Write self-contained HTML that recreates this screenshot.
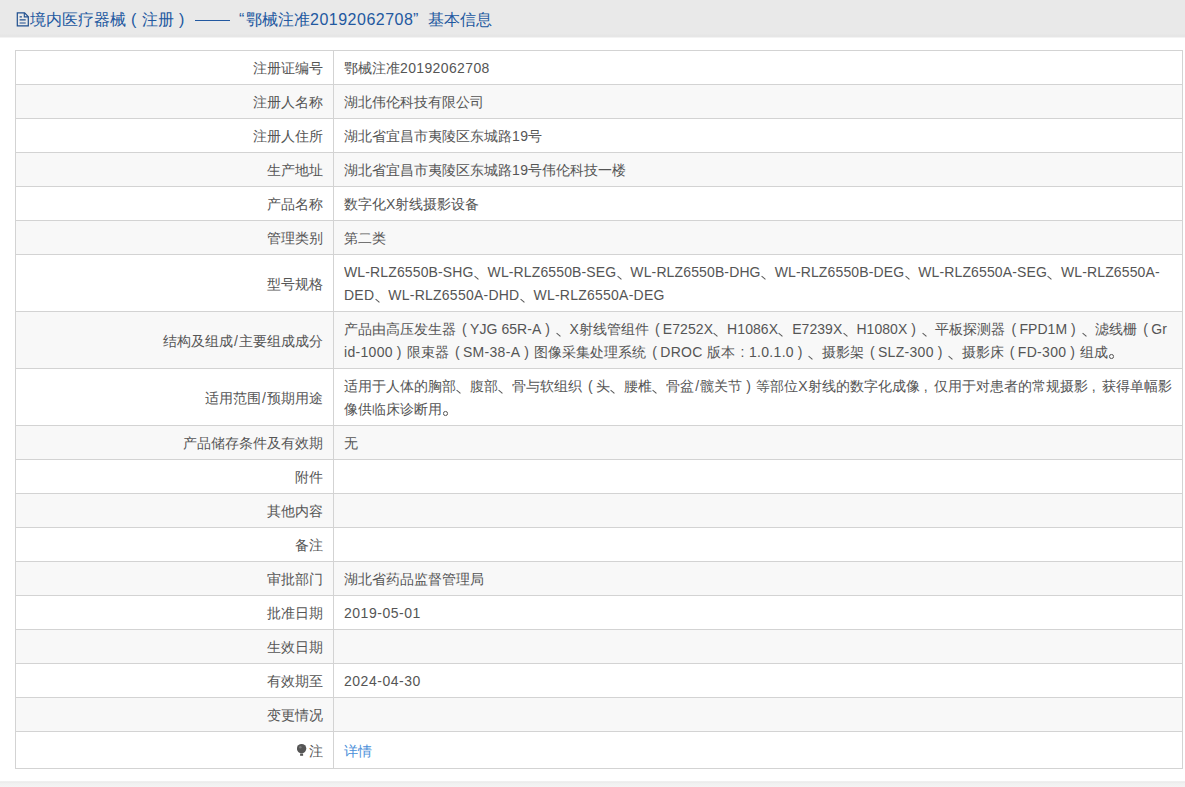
<!DOCTYPE html>
<html><head><meta charset="utf-8">
<style>
html,body{margin:0;padding:0;background:#fff;width:1185px;height:787px;overflow:hidden;}
body{font-family:"Liberation Sans",sans-serif;color:#555;font-size:14px;position:relative;}
i{display:inline-block;width:1em;font-style:normal;position:relative;box-sizing:border-box;}
i.lp{padding-left:0.43em;}
i.rp{padding-left:0.28em;}
i.cm{padding-left:0.3em;}
i.cl{padding-left:0.4em;}
i.lq{padding-left:0.45em;}
i.rq{padding-left:0.05em;}
i.dn::after{content:"";position:absolute;left:0.3px;top:16px;width:4.6px;height:1.2px;background:currentColor;transform:rotate(40deg);}
i.pd::after{content:"";position:absolute;left:1px;top:13.2px;width:2.6px;height:2.6px;border:1.1px solid currentColor;border-radius:50%;}
.hd{position:absolute;left:0;top:0;width:1185px;height:38px;background:linear-gradient(#e9e9e9 0,#e9e9e9 34px,#e6e6e6 35px,#e6e6e6 37px,#f3f3f3 37px,#f3f3f3 38px);}
.hd .s{position:absolute;top:9px;font-size:16px;line-height:22px;color:#2258a0;white-space:nowrap;}
.hd .ic{position:absolute;left:16px;top:11.5px;}
.hd .dash{position:absolute;left:195px;top:19.6px;width:35px;height:1.4px;background:#2258a0;}
.ft{position:absolute;left:0;top:781px;width:1185px;height:6px;background:linear-gradient(#f6f6f6 0,#e9e9e9 1px,#f0f0f0 2px,#f4f4f4 6px);}
table{position:absolute;left:15px;top:50px;border-collapse:collapse;width:1168px;table-layout:fixed;border:1px solid #cfcfcf;}
td{border:1px solid #d3d3d3;padding:0 10px;line-height:23px;white-space:nowrap;overflow:hidden;vertical-align:middle;}
td.l{width:297px;text-align:right;}
tr:nth-child(even) td{background:#f8f8f8;}
.ln{height:23px;position:relative;top:1px;}
.pin{vertical-align:-1px;margin-right:1px;}
a{color:#4a8fd9;text-decoration:none;}
.tofu i:not([class]){-webkit-text-stroke:1.1px;}
b.sl{font-weight:normal;padding:0 1.2px;}
s{display:inline-block;text-decoration:none;transform:scaleY(1.08);transform-origin:0 16.5px;}
b.sl{display:inline-block;transform:scaleY(1.08);transform-origin:0 16.5px;}

</style></head><body>
<div class="hd"><svg class="ic" width="16" height="18" viewBox="0 0 16 18"><path d="M1.3 0.9H8.6L12.3 4.7V13.9H1.3Z" fill="none" stroke="#1f4f8f" stroke-width="1.2"/><path d="M8.3 1V4.9H12.3" fill="none" stroke="#1f4f8f" stroke-width="1.1"/><path d="M3.6 4.9H5.9M3.6 7.9H9.7M3.6 11H9.7" stroke="#1f4f8f" stroke-width="1.1"/></svg>
<span class="s" style="left:30px"><i>境</i><i>内</i><i>医</i><i>疗</i><i>器</i><i>械</i></span>
<span class="s" style="left:131px">(</span>
<span class="s" style="left:142px"><i>注</i><i>册</i></span>
<span class="s" style="left:179px">)</span>
<span class="dash"></span>
<span class="s" style="left:239px">&#8220;</span>
<span class="s" style="left:246px"><i>鄂</i><i>械</i><i>注</i><i>准</i></span>
<span class="s" style="left:310px;letter-spacing:0.5px"><s>20192062708</s></span>
<span class="s" style="left:413px">&#8221;</span>
<span class="s" style="left:428px"><i>基</i><i>本</i><i>信</i><i>息</i></span>
</div>
<table>
<tr style="height:34px"><td class="l"><div class="ln"><i>注</i><i>册</i><i>证</i><i>编</i><i>号</i></div></td><td><div class="ln" style="letter-spacing:0.37px"><i>鄂</i><i>械</i><i>注</i><i>准</i><s>20192062708</s></div></td></tr>
<tr style="height:34px"><td class="l"><div class="ln"><i>注</i><i>册</i><i>人</i><i>名</i><i>称</i></div></td><td><div class="ln" style="letter-spacing:0.00px"><i>湖</i><i>北</i><i>伟</i><i>伦</i><i>科</i><i>技</i><i>有</i><i>限</i><i>公</i><i>司</i></div></td></tr>
<tr style="height:34px"><td class="l"><div class="ln"><i>注</i><i>册</i><i>人</i><i>住</i><i>所</i></div></td><td><div class="ln" style="letter-spacing:0.45px"><i>湖</i><i>北</i><i>省</i><i>宜</i><i>昌</i><i>市</i><i>夷</i><i>陵</i><i>区</i><i>东</i><i>城</i><i>路</i><s>19</s><i>号</i></div></td></tr>
<tr style="height:34px"><td class="l"><div class="ln"><i>生</i><i>产</i><i>地</i><i>址</i></div></td><td><div class="ln" style="letter-spacing:0.45px"><i>湖</i><i>北</i><i>省</i><i>宜</i><i>昌</i><i>市</i><i>夷</i><i>陵</i><i>区</i><i>东</i><i>城</i><i>路</i><s>19</s><i>号</i><i>伟</i><i>伦</i><i>科</i><i>技</i><i>一</i><i>楼</i></div></td></tr>
<tr style="height:34px"><td class="l"><div class="ln"><i>产</i><i>品</i><i>名</i><i>称</i></div></td><td><div class="ln" style="letter-spacing:0.00px"><i>数</i><i>字</i><i>化</i><s>X</s><i>射</i><i>线</i><i>摄</i><i>影</i><i>设</i><i>备</i></div></td></tr>
<tr style="height:34px"><td class="l"><div class="ln"><i>管</i><i>理</i><i>类</i><i>别</i></div></td><td><div class="ln" style="letter-spacing:0.00px"><i>第</i><i>二</i><i>类</i></div></td></tr>
<tr style="height:57px"><td class="l"><div class="ln"><i>型</i><i>号</i><i>规</i><i>格</i></div></td><td><div class="ln" style="letter-spacing:0.13px"><s>WL-RLZ6550B-SHG</s><i class="dn">&nbsp;</i><s>WL-RLZ6550B-SEG</s><i class="dn">&nbsp;</i><s>WL-RLZ6550B-DHG</s><i class="dn">&nbsp;</i><s>WL-RLZ6550B-DEG</s><i class="dn">&nbsp;</i><s>WL-RLZ6550A-SEG</s><i class="dn">&nbsp;</i><s>WL-RLZ6550A-</s></div><div class="ln" style="letter-spacing:0.24px"><s>DED</s><i class="dn">&nbsp;</i><s>WL-RLZ6550A-DHD</s><i class="dn">&nbsp;</i><s>WL-RLZ6550A-DEG</s></div></td></tr>
<tr style="height:57px"><td class="l"><div class="ln"><i>结</i><i>构</i><i>及</i><i>组</i><i>成</i><b class="sl">/</b><i>主</i><i>要</i><i>组</i><i>成</i><i>成</i><i>分</i></div></td><td><div class="ln" style="letter-spacing:0.07px"><i>产</i><i>品</i><i>由</i><i>高</i><i>压</i><i>发</i><i>生</i><i>器</i><i class="lp">(</i><s>YJG 65R-A</s><i class="rp">)</i><i class="dn">&nbsp;</i><s>X</s><i>射</i><i>线</i><i>管</i><i>组</i><i>件</i><i class="lp">(</i><s>E7252X</s><i class="dn">&nbsp;</i><s>H1086X</s><i class="dn">&nbsp;</i><s>E7239X</s><i class="dn">&nbsp;</i><s>H1080X</s><i class="rp">)</i><i class="dn">&nbsp;</i><i>平</i><i>板</i><i>探</i><i>测</i><i>器</i><i class="lp">(</i><s>FPD1M</s><i class="rp">)</i><i class="dn">&nbsp;</i><i>滤</i><i>线</i><i>栅</i><i class="lp">(</i><s>Gr</s></div><div class="ln" style="letter-spacing:0.31px"><s>id-1000</s><i class="rp">)</i><i>限</i><i>束</i><i>器</i><i class="lp">(</i><s>SM-38-A</s><i class="rp">)</i><i>图</i><i>像</i><i>采</i><i>集</i><i>处</i><i>理</i><i>系</i><i>统</i><i class="lp">(</i><s>DROC&nbsp;</s><i>版</i><i>本</i><i class="cl">:</i><s>1.0.1.0</s><i class="rp">)</i><i class="dn">&nbsp;</i><i>摄</i><i>影</i><i>架</i><i class="lp">(</i><s>SLZ-300</s><i class="rp">)</i><i class="dn">&nbsp;</i><i>摄</i><i>影</i><i>床</i><i class="lp">(</i><s>FD-300</s><i class="rp">)</i><i>组</i><i>成</i><i class="pd">&nbsp;</i></div></td></tr>
<tr style="height:57px"><td class="l"><div class="ln"><i>适</i><i>用</i><i>范</i><i>围</i><b class="sl">/</b><i>预</i><i>期</i><i>用</i><i>途</i></div></td><td><div class="ln" style="letter-spacing:0.00px"><i>适</i><i>用</i><i>于</i><i>人</i><i>体</i><i>的</i><i>胸</i><i>部</i><i class="dn">&nbsp;</i><i>腹</i><i>部</i><i class="dn">&nbsp;</i><i>骨</i><i>与</i><i>软</i><i>组</i><i>织</i><i class="lp">(</i><i>头</i><i class="dn">&nbsp;</i><i>腰</i><i>椎</i><i class="dn">&nbsp;</i><i>骨</i><i>盆</i><b class="sl">/</b><i>髋</i><i>关</i><i>节</i><i class="rp">)</i><i>等</i><i>部</i><i>位</i><s>X</s><i>射</i><i>线</i><i>的</i><i>数</i><i>字</i><i>化</i><i>成</i><i>像</i><i class="cm">,</i><i>仅</i><i>用</i><i>于</i><i>对</i><i>患</i><i>者</i><i>的</i><i>常</i><i>规</i><i>摄</i><i>影</i><i class="cm">,</i><i>获</i><i>得</i><i>单</i><i>幅</i><i>影</i></div><div class="ln" style="letter-spacing:0.00px"><i>像</i><i>供</i><i>临</i><i>床</i><i>诊</i><i>断</i><i>用</i><i class="pd">&nbsp;</i></div></td></tr>
<tr style="height:34px"><td class="l"><div class="ln"><i>产</i><i>品</i><i>储</i><i>存</i><i>条</i><i>件</i><i>及</i><i>有</i><i>效</i><i>期</i></div></td><td><div class="ln" style="letter-spacing:0.00px"><i>无</i></div></td></tr>
<tr style="height:34px"><td class="l"><div class="ln"><i>附</i><i>件</i></div></td><td></td></tr>
<tr style="height:34px"><td class="l"><div class="ln"><i>其</i><i>他</i><i>内</i><i>容</i></div></td><td></td></tr>
<tr style="height:34px"><td class="l"><div class="ln"><i>备</i><i>注</i></div></td><td></td></tr>
<tr style="height:34px"><td class="l"><div class="ln"><i>审</i><i>批</i><i>部</i><i>门</i></div></td><td><div class="ln" style="letter-spacing:0.00px"><i>湖</i><i>北</i><i>省</i><i>药</i><i>品</i><i>监</i><i>督</i><i>管</i><i>理</i><i>局</i></div></td></tr>
<tr style="height:34px"><td class="l"><div class="ln"><i>批</i><i>准</i><i>日</i><i>期</i></div></td><td><div class="ln" style="letter-spacing:0.52px"><s>2019-05-01</s></div></td></tr>
<tr style="height:34px"><td class="l"><div class="ln"><i>生</i><i>效</i><i>日</i><i>期</i></div></td><td></td></tr>
<tr style="height:34px"><td class="l"><div class="ln"><i>有</i><i>效</i><i>期</i><i>至</i></div></td><td><div class="ln" style="letter-spacing:0.52px"><s>2024-04-30</s></div></td></tr>
<tr style="height:34px"><td class="l"><div class="ln"><i>变</i><i>更</i><i>情</i><i>况</i></div></td><td></td></tr>
<tr style="height:37px"><td class="l"><div class="ln"><svg class="pin" width="11" height="14" viewBox="0 0 11 14"><circle cx="4.6" cy="5.6" r="4.7" fill="#555"/><path d="M3.1 10.5H6.1V12.8H3.1Z" fill="#555"/><circle cx="3.3" cy="4.2" r="1.3" fill="#7a7a7a"/></svg><i>注</i></div></td><td><div class="ln"><a><i>详</i><i>情</i></a></div></td></tr>
</table>
<div class="ft"></div>
<script>
(function(){try{var s=document.createElement('span');s.style.cssText='font-family:"Liberation Sans",sans-serif;font-size:100px;position:absolute;left:0;top:0;visibility:hidden;white-space:nowrap;';s.textContent='注册';document.body.appendChild(s);var w=s.getBoundingClientRect().width;document.body.removeChild(s);if(w<180){document.documentElement.className+=' tofu';}}catch(e){}})();
</script>
</body></html>
